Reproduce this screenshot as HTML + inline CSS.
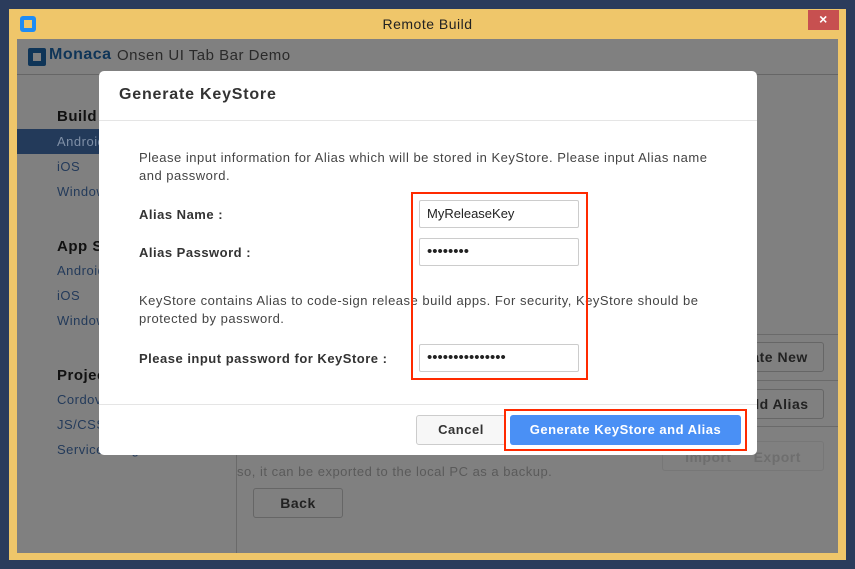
<!DOCTYPE html>
<html><head><style>
*{margin:0;padding:0;box-sizing:border-box}
body{width:855px;height:569px;background:#2b3c5c;position:relative;overflow:hidden;font-family:"Liberation Sans",sans-serif;font-size:13px;color:#333;letter-spacing:0.5px}
.a{position:absolute}
.frame{left:9px;top:9px;width:837px;height:551px;background:#efc66a}
.content{left:17px;top:39px;width:821px;height:514px;background:#808080}
.t{white-space:nowrap}
.side{color:#233a5a}
.btn{border:1px solid #666;border-radius:3px;background:#808080;color:#222;font-weight:bold;font-size:14px;text-align:center}
.inp{border:1px solid #ccc;border-radius:2px;background:#fff;left:419px;width:160px;height:28px;padding-left:7px;font-size:13px;color:#222;line-height:26px;letter-spacing:0}
.lbl{left:139px;font-weight:bold;color:#333;font-size:13px}
</style></head><body>
<div class="a frame"></div>
<div class="a" style="left:20px;top:16px;width:16px;height:16px;background:#1e8cf5;border-radius:3px"></div>
<div class="a" style="left:24px;top:20px;width:8px;height:8px;background:#efc66a"></div>
<div class="a t" style="left:0;width:855px;top:16px;text-align:center;font-size:14px;color:#222">Remote Build</div>
<div class="a" style="left:808px;top:10px;width:31px;height:20px;background:#c75050;color:#fff;text-align:center;font-size:14px;line-height:19px;font-weight:bold">×</div>
<div class="a content"></div>
<div class="a" style="left:17px;top:74px;width:821px;height:1px;background:#666"></div>
<div class="a" style="left:28px;top:48px;width:18px;height:18px;background:#0f3558;border-radius:2px"></div>
<div class="a" style="left:33px;top:53px;width:8px;height:8px;background:#808080"></div>
<div class="a t" style="left:49px;top:46px;font-size:16px;color:#0f3558;font-weight:bold">Monaca</div>
<div class="a t" style="left:117px;top:47px;font-size:15px;color:#2a2a2a">Onsen UI Tab Bar Demo</div>
<div class="a" style="left:236px;top:75px;width:1px;height:478px;background:#6a6a6a"></div>
<div class="a t" style="left:57px;top:108px;font-size:15px;color:#111;font-weight:bold">Build</div>
<div class="a" style="left:17px;top:129px;width:82px;height:25px;background:#233a5a"></div>
<div class="a t" style="left:57px;top:134px;color:#7f8fa6">Android</div>
<div class="a t side" style="left:57px;top:159px">iOS</div>
<div class="a t side" style="left:57px;top:184px">Windows</div>
<div class="a t" style="left:57px;top:238px;font-size:15px;color:#111;font-weight:bold">App S</div>
<div class="a t side" style="left:57px;top:263px">Android</div>
<div class="a t side" style="left:57px;top:288px">iOS</div>
<div class="a t side" style="left:57px;top:313px">Windows</div>
<div class="a t" style="left:57px;top:367px;font-size:15px;color:#111;font-weight:bold">Projec</div>
<div class="a t side" style="left:57px;top:392px">Cordova</div>
<div class="a t side" style="left:57px;top:417px">JS/CSS</div>
<div class="a t side" style="left:57px;top:442px">Service Integ</div>
<div class="a" style="left:237px;top:334px;width:601px;height:1px;background:#6a6a6a"></div>
<div class="a" style="left:237px;top:380px;width:601px;height:1px;background:#6a6a6a"></div>
<div class="a" style="left:237px;top:426px;width:601px;height:1px;background:#6a6a6a"></div>
<div class="a btn" style="left:700px;top:342px;width:124px;height:30px;line-height:28px">&nbsp;&nbsp;&nbsp;&nbsp;&nbsp;&nbsp;&nbsp;&nbsp;ate New</div>
<div class="a btn" style="left:700px;top:389px;width:124px;height:30px;line-height:28px">&nbsp;&nbsp;&nbsp;&nbsp;&nbsp;&nbsp;&nbsp;&nbsp;dd Alias</div>
<div class="a btn" style="left:662px;top:441px;width:162px;height:30px;line-height:30px;color:#6e6e6e;border-color:#777">Import &nbsp;&nbsp;&nbsp; Export</div>
<div class="a t" style="left:237px;top:464px;color:#5a5a5a">so, it can be exported to the local PC as a backup.</div>
<div class="a btn" style="left:253px;top:488px;width:90px;height:30px;line-height:28px">Back</div>
<!-- dialog -->
<div class="a" style="left:99px;top:71px;width:658px;height:384px;background:#fff;border-radius:5px"></div>
<div class="a t" style="left:119px;top:86px;font-size:16px;font-weight:bold;color:#333;letter-spacing:0.8px">Generate KeyStore</div>
<div class="a" style="left:99px;top:120px;width:658px;height:1px;background:#e5e5e5"></div>
<div class="a" style="left:139px;top:149px;width:590px;line-height:18px;color:#444">Please input information for Alias which will be stored in KeyStore. Please input Alias name and password.</div>
<div class="a lbl t" style="top:207px">Alias Name :</div>
<div class="a lbl t" style="top:245px">Alias Password :</div>
<div class="a inp" style="top:200px">MyReleaseKey</div>
<div class="a inp" style="top:238px;font-size:15px">••••••••</div>
<div class="a" style="left:139px;top:292px;width:575px;line-height:18px;color:#444">KeyStore contains Alias to code-sign release build apps. For security, KeyStore should be protected by password.</div>
<div class="a lbl t" style="top:351px">Please input password for KeyStore :</div>
<div class="a inp" style="top:344px;font-size:15px">•••••••••••••••</div>
<div class="a" style="left:411px;top:192px;width:177px;height:188px;border:2px solid #ff2a00"></div>
<div class="a" style="left:99px;top:404px;width:658px;height:1px;background:#e5e5e5"></div>
<div class="a" style="left:416px;top:415px;width:90px;height:30px;border:1px solid #ccc;border-radius:3px;background:#f7f7f7;text-align:center;line-height:28px;font-weight:bold;color:#333">Cancel</div>
<div class="a" style="left:510px;top:415px;width:231px;height:30px;border-radius:3px;background:#4a90f5;text-align:center;line-height:30px;font-weight:bold;color:#fff">Generate KeyStore and Alias</div>
<div class="a" style="left:504px;top:409px;width:243px;height:42px;border:2px solid #ff2a00"></div>
</body></html>
